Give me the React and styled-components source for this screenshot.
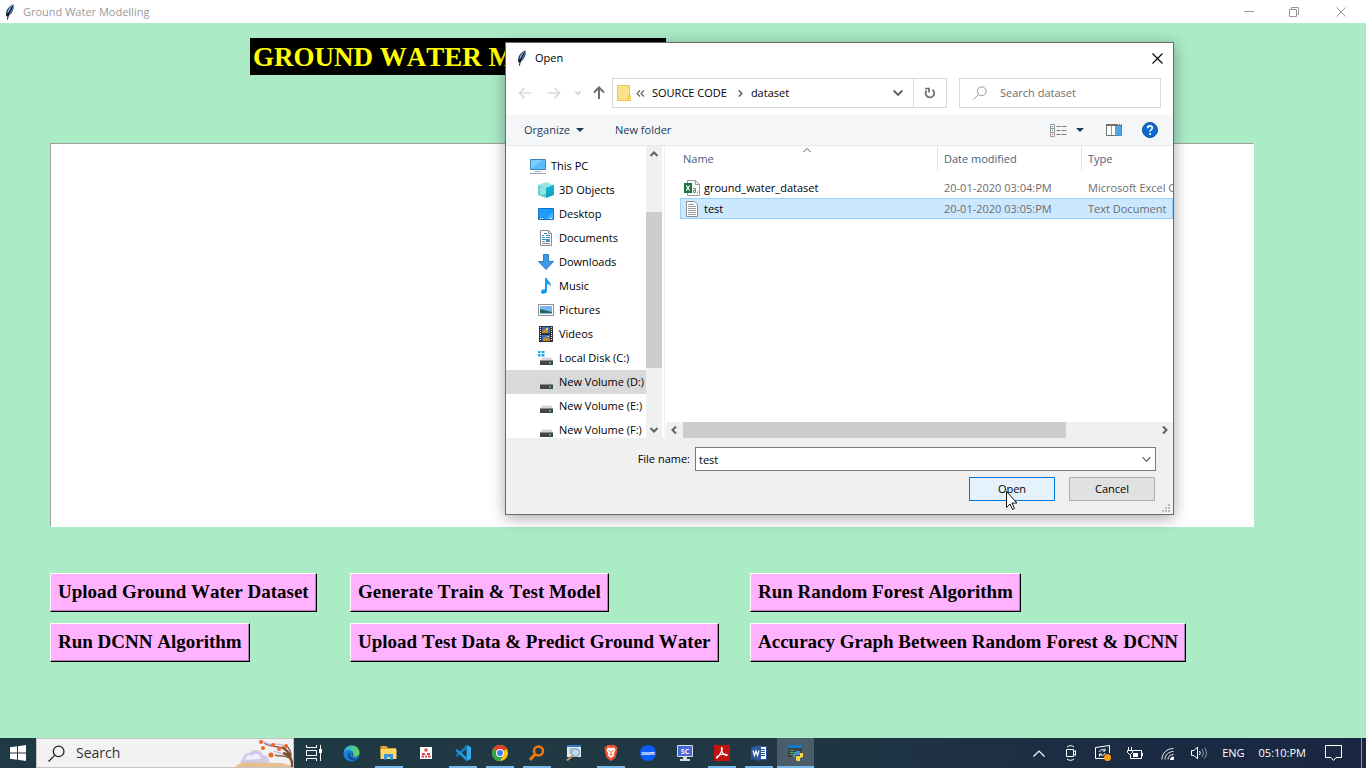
import React, { useState } from "react";
import styled, { createGlobalStyle } from "styled-components";

const GlobalStyle = createGlobalStyle`
  * {
    box-sizing: border-box;
  }
  body {
    margin: 0;
    font-family: "Open Sans", "Noto Sans", sans-serif;
    font-size: 11px;
    line-height: 16px;
    color: #000;
  }
  button, input, textarea {
    font: inherit;
    color: inherit;
    border-radius: 0;
    outline: none;
  }
  svg {
    display: block;
    flex: none;
  }
`;

const Screen = styled.div`
  position: relative;
  display: flex;
  flex-direction: column;
  min-height: 100vh;
  overflow: hidden;
  background: #abebc6;
`;

const IconButton = styled.button`
  display: flex;
  align-items: center;
  justify-content: center;
  flex: none;
  width: ${(props) => props.$width || 24}px;
  height: 100%;
  padding: 0;
  border: 0;
  background: transparent;
`;

/* ---------- main window ---------- */

const TitleBar = styled.header`
  display: flex;
  align-items: center;
  height: 23px;
  padding-left: 4px;
  background: #fff;
  color: #999;
`;

const TitleText = styled.span`
  flex: 1;
  padding-left: 7px;
`;

const Main = styled.main`
  flex: 1;
  padding: 15px 112px 0 50px;
`;

const Heading = styled.h1`
  width: 416px;
  height: 37px;
  margin: 0 0 68px 200px;
  padding-left: 3px;
  background: #000;
  color: #ff0;
  font: bold 27px/39px "Liberation Serif", serif;
  font-kerning: none;
  white-space: nowrap;
  overflow: hidden;
`;

const Output = styled.textarea`
  display: block;
  width: 100%;
  height: 384px;
  padding: 2px;
  border: 1px solid #fff;
  border-top-color: #a0a0a0;
  border-left-color: #a0a0a0;
  background: #fff;
  resize: none;
`;

const Actions = styled.div`
  display: grid;
  grid-template-columns: 300px 400px auto;
  justify-content: start;
  justify-items: start;
  gap: 11px 0;
  margin-top: 46px;
`;

const ActionButton = styled.button`
  height: 39px;
  padding: 0 7px 2px;
  border: 1px solid;
  border-color: #fff #000 #000 #fff;
  background: #ffb3fe;
  box-shadow: inset -1px -1px 0 #b27db2;
  font: bold 19px/35px "Liberation Serif", serif;
  font-kerning: none;
  white-space: nowrap;
`;

/* ---------- open dialog ---------- */

const Dialog = styled.section`
  position: absolute;
  top: 42px;
  left: 505px;
  display: flex;
  flex-direction: column;
  width: 669px;
  border: 1px solid #6b6b6b;
  background: #fff;
  box-shadow: 0 3px 14px rgba(0, 0, 0, 0.35);
`;

const DialogTitle = styled.div`
  display: flex;
  align-items: center;
  height: 30px;
  padding-left: 10px;
`;

const NavBar = styled.div`
  display: flex;
  align-items: center;
  height: 42px;
  padding: 0 12px 2px 5px;
`;

const NavButton = styled(IconButton)`
  height: 30px;
`;

const Address = styled.div`
  display: flex;
  align-items: center;
  flex: 1;
  height: 30px;
  padding-left: 4px;
  border: 1px solid #d9d9d9;
`;

const CrumbMark = styled.span`
  padding-left: 5px;
`;

const Crumb = styled.a`
  flex: ${(props) => (props.$last ? 1 : "none")};
  padding: 0 10px 0 7px;
  color: #000;
  text-decoration: none;
`;

const RefreshButton = styled(IconButton)`
  height: 30px;
  border: 1px solid #d9d9d9;
  border-left: 0;
`;

const SearchField = styled.label`
  display: flex;
  align-items: center;
  gap: 13px;
  width: 202px;
  height: 30px;
  margin-left: 12px;
  padding-left: 13px;
  border: 1px solid #d9d9d9;
`;

const SearchInput = styled.input`
  flex: 1;
  min-width: 0;
  padding: 0;
  border: 0;
  background: transparent;
  &::placeholder {
    color: #6d6d6d;
    opacity: 1;
  }
`;

const ToolBar = styled.div`
  display: flex;
  align-items: center;
  height: 31px;
  padding: 0 10px 0 18px;
  border-bottom: 1px solid #e5e9ee;
  background: #f5f6f8;
`;

const ToolButton = styled.button`
  display: flex;
  align-items: center;
  gap: 6px;
  margin-right: 31px;
  padding: 0;
  border: 0;
  background: transparent;
  color: #1e395b;
`;

const Spacer = styled.div`
  flex: 1;
`;

const Browser = styled.div`
  display: flex;
  height: 292px;
`;

const Tree = styled.ul`
  width: 140px;
  margin: 0;
  padding: 8px 0 0;
  list-style: none;
  overflow: hidden;
`;

const TreeItem = styled.li`
  display: flex;
  align-items: center;
  gap: 5px;
  height: 24px;
  padding-left: ${(props) => (props.$root ? 24 : 32)}px;
  background: ${(props) => (props.$selected ? "#d9d9d9" : "transparent")};
  white-space: nowrap;
`;

const TreeScroll = styled.div`
  display: flex;
  flex-direction: column;
  width: 16px;
  background: #f0f0f0;
`;

const ScrollButton = styled(IconButton)`
  width: 16px;
  height: 16px;
`;

const TreeThumb = styled.div`
  height: 156px;
  margin: 50px 0 auto;
  background: #cdcdcd;
`;

const Files = styled.div`
  display: flex;
  flex-direction: column;
  flex: 1;
  min-width: 0;
  margin-left: 2px;
  border-left: 1px solid #f0f0f0;
`;

const FileTable = styled.table`
  table-layout: fixed;
  width: calc(100% - 15px);
  margin-left: 15px;
  border-collapse: collapse;
`;

const HeadCell = styled.th`
  position: relative;
  width: ${(props) => props.$width};
  height: 31px;
  padding: 0 0 6px;
  color: #4c607a;
  font-weight: normal;
  text-align: left;
`;

const HeadLabel = styled.div`
  height: 25px;
  padding-left: ${(props) => props.$pad}px;
  border-right: 1px solid ${(props) => (props.$last ? "transparent" : "#e5e5e5")};
  line-height: 26px;
`;

const SortMark = styled.span`
  position: absolute;
  top: 0;
  left: 0;
  right: 4px;
  display: flex;
  justify-content: center;
`;

const FileRow = styled.tr`
  height: 21px;
  background: ${(props) => (props.$selected ? "#cce8ff" : "transparent")};
  outline: ${(props) => (props.$selected ? "1px solid #99d1ff" : "none")};
  outline-offset: -1px;
`;

const FileCell = styled.td`
  padding: 0 0 0 ${(props) => (props.$name ? 4 : 6)}px;
  color: ${(props) => (props.$name ? "#000" : "#6d6d6d")};
  white-space: nowrap;
  overflow: hidden;
`;

const FileName = styled.span`
  display: flex;
  align-items: center;
  gap: 4px;
`;

const FileScroll = styled.div`
  display: flex;
  align-items: center;
  height: 16px;
  margin-top: auto;
  margin-left: 1px;
  background: #f0f0f0;
`;

const FileThumb = styled.div`
  width: 383px;
  height: 16px;
  margin: 0 auto 0 1px;
  background: #cdcdcd;
`;

const DialogFooter = styled.form`
  display: flex;
  flex-direction: column;
  gap: 6px;
  position: relative;
  height: 76px;
  padding: 9px 17px 0 0;
  background: #f0f0f0;
`;

const FooterRow = styled.div`
  display: flex;
  align-items: center;
  justify-content: flex-end;
  gap: ${(props) => props.$gap}px;
  height: 24px;
  padding-right: ${(props) => props.$inset || 0}px;
`;

const FileNameBox = styled.div`
  display: flex;
  width: 461px;
  height: 24px;
  border: 1px solid #7a7a7a;
  background: #fff;
`;

const FileNameInput = styled.input`
  flex: 1;
  min-width: 0;
  padding: 2px 3px 0;
  border: 0;
  background: transparent;
`;

const DialogButton = styled.button`
  width: 86px;
  height: 24px;
  padding: 0;
  border: 1px solid ${(props) => (props.$primary ? "#0078d7" : "#adadad")};
  background: ${(props) => (props.$primary ? "#e5f1fb" : "#e1e1e1")};
`;

const Grip = styled.svg`
  position: absolute;
  right: 3px;
  bottom: 2px;
`;

const Cursor = styled.svg`
  position: absolute;
  top: 448px;
  left: 500px;
`;

/* ---------- task bar ---------- */

const TaskBar = styled.footer`
  display: flex;
  height: 30px;
  background: linear-gradient(90deg, #1f3a44 0%, #203843 55%, #1b2c43 80%, #1a2742 100%);
  color: #fff;
`;

const TaskSearch = styled.label`
  display: flex;
  align-items: center;
  width: 258px;
  padding-left: 11px;
  border: 1px solid #c4c4c4;
  background: #f2f2f2;
`;

const TaskSearchInput = styled.input`
  flex: 1;
  min-width: 0;
  padding: 0 0 0 11px;
  border: 0;
  background: transparent;
  font-size: 14px;
  &::placeholder {
    color: #333;
    opacity: 1;
  }
`;

const TaskButton = styled(IconButton)`
  width: ${(props) => props.$width || 37}px;
  background: ${(props) => (props.$active ? "#4b5d68" : "transparent")};
  box-shadow: ${(props) => (props.$active ? "inset 0 -2px 0 #76b9ed" : "none")};
  ${(props) =>
    props.$open &&
    `background: linear-gradient(#76b9ed, #76b9ed) no-repeat center bottom / 28px 2px;`}
`;

const Tray = styled.div`
  display: flex;
  align-items: center;
  margin-left: auto;
`;

const TrayText = styled.span`
  padding: 0 7px;
  white-space: nowrap;
`;

const ShowDesktop = styled.button`
  width: 5px;
  height: 30px;
  margin-left: 8px;
  padding: 0;
  border: 0;
  border-left: 1px solid #8a929f;
  background: transparent;
`;

/* ---------- icons ---------- */

const Feather = () => (
  <svg width="12" height="16" viewBox="0 0 12 16">
    <path d="M9.500 0.500C6 1.500 3 4.500 2.200 8.500L2 12l1.800.5C6.500 11 8.700 8 9.500 4.500z" fill="#1b2838" />
    <path d="M9 1C6.500 2.500 4 5 3.200 9L5 8l1.500-3z" fill="#8db8ef" />
    <path d="M9 1.500L6.500 6 4.500 11C7 9.500 8.500 6.500 9 4z" fill="#4a80cc" />
    <path d="M8.500 2.500L4.500 9.500 3.500 15.500" fill="none" stroke="#05070a" />
  </svg>
);

const Chevron = ({ dir = "down", size = 8, color = "#606060", weight = 2 }) => {
  const turn = { down: 0, left: 90, up: 180, right: 270 }[dir];
  return (
    <svg width={size} height={size} viewBox="0 0 8 8">
      <path d="M0.500 2L4 5.500 7.500 2" fill="none" stroke={color} strokeWidth={weight} transform={`rotate(${turn} 4 4)`} />
    </svg>
  );
};

const Arrow = ({ dir, color }) => (
  <svg width="14" height="14" viewBox="0 0 14 14">
    <path
      d="M13 7H2M6.500 2L1.500 7l5 5"
      fill="none"
      stroke={color}
      strokeWidth={dir === "up" ? 2 : 1.7}
      transform={`rotate(${{ left: 0, up: 90, right: 180 }[dir]} 7 7)`}
    />
  </svg>
);

const Caret = () => (
  <svg width="8" height="4" viewBox="0 0 8 4">
    <path d="M0 0h8L4 4z" fill="#1e395b" />
  </svg>
);

const Cross = ({ size = 11, color = "#000" }) => (
  <svg width={size} height={size} viewBox="0 0 11 11">
    <path d="M0.500 0.500l10 10M10.500 0.500l-10 10" stroke={color} strokeWidth="1.100" />
  </svg>
);

const Magnifier = ({ size, color, weight = 1 }) => (
  <svg width={size} height={size} viewBox="0 0 16 16" fill="none" stroke={color} strokeWidth={weight}>
    <circle cx="10" cy="6" r="5" />
    <path d="M6.500 9.500L0.500 15.500" />
  </svg>
);

const Folder = () => (
  <svg width="14" height="16" viewBox="0 0 14 16">
    <path d="M0.500 0.500h12v10h1v5h-13z" fill="#ffe08a" stroke="#ecc44e" />
    <path d="M11.500 10.500v5" stroke="#ecc44e" />
  </svg>
);

const ViewIcon = () => (
  <svg width="17" height="13" viewBox="0 0 17 13">
    <path d="M0.500 0.500h4v12h-4zM0.500 4.500h4M0.500 8.500h4" fill="#fff" stroke="#9a9a9a" />
    <path d="M2 2h1v1H2zM2 6h1v1H2z" fill="#3a78b5" />
    <path d="M2 10h1v1H2z" fill="#c22" />
    <path d="M6.500 2.500h4m1 0h5M6.500 6.500h4m1 0h5M6.500 10.500h4m1 0h5" stroke="#7d7d7d" />
  </svg>
);

const PreviewIcon = () => (
  <svg width="16" height="12" viewBox="0 0 16 12">
    <path d="M0.500 0.500h15v11h-15z" fill="#fff" stroke="#707070" />
    <path d="M0 0h16v2H0z" fill="#707070" />
    <path d="M5.500 2v9" stroke="#999" />
    <path d="M9 2h6.500v9.500H9z" fill="#4ba3e8" />
    <path d="M12 0.500h1M14 0.500h1" stroke="#fff" />
  </svg>
);

const HelpIcon = () => (
  <svg width="16" height="16" viewBox="0 0 16 16">
    <circle cx="8" cy="8" r="7.500" fill="#0a6cd0" stroke="#0b4f99" />
    <path d="M5.600 6.200C5.700 3 10.500 3.200 10.300 6c-.1 1.600-2.200 1.700-2.200 3.600" fill="none" stroke="#fff" strokeWidth="1.700" />
    <circle cx="8.100" cy="12" r="1.100" fill="#fff" />
  </svg>
);

const PcIcon = () => (
  <svg width="16" height="16" viewBox="0 0 16 16">
    <path d="M0.500 1.500h15v10h-15z" fill="#58bdfb" stroke="#3b87bb" />
    <path d="M1 11V2h11z" fill="#8dd5ff" opacity=".7" />
    <path d="M5 13.500h6M0 15.500h16" stroke="#93a3b0" />
  </svg>
);

const CubeIcon = () => (
  <svg width="16" height="16" viewBox="0 0 16 16">
    <path d="M8 0l8 3-8 3-8-3z" fill="#9be4e6" />
    <path d="M0 3l8 3v10l-8-3z" fill="#5fcfd6" />
    <path d="M16 3L8 6v10l8-3z" fill="#12a5bf" />
    <path d="M2 5l6 1v6l-6 1z" fill="#c5f0f0" opacity=".55" />
    <path d="M8 6l8-3v7l-8 1z" fill="#0fb2cd" />
  </svg>
);

const DesktopIcon = () => (
  <svg width="16" height="16" viewBox="0 0 16 16">
    <path d="M0.500 2.500h15v11h-15z" fill="#1c9dfb" stroke="#1271b8" />
    <path d="M8 13l7-7v7z" fill="#48b3ff" />
    <path d="M2 12.500h1m1 0h1m7 0h2" stroke="#fff" />
  </svg>
);

const DocumentIcon = () => (
  <svg width="16" height="16" viewBox="0 0 16 16">
    <path d="M2.500 0.500h8l3 3v12h-11z" fill="#fff" stroke="#8c8c8c" />
    <path d="M10.500 0.500v3h3" fill="none" stroke="#8c8c8c" />
    <path d="M6 3.500h3M4 5.500h2m2 0h4M4 7.500h3m1 0h4M4 9.500h4" stroke="#2d8bc7" />
    <path d="M8 9h4v3H8z" fill="#4b90b8" />
    <path d="M4 11.500h3M4 13.500h8" stroke="#888" />
  </svg>
);

const DownloadIcon = () => (
  <svg width="16" height="16" viewBox="0 0 16 16">
    <path d="M5.500 0.500h5v7h5L8 15.500 0.500 7.500h5z" fill="#3f97e8" stroke="#2f7dc6" />
  </svg>
);

const MusicIcon = () => (
  <svg width="16" height="16" viewBox="0 0 16 16">
    <path d="M7 0h2c0 3 4.500 4 4 9-.5-2-2-3-4-3v7c0 3-6 4-6 1 0-2 2-3 4-2.500z" fill="#149bf0" />
  </svg>
);

const PictureIcon = () => (
  <svg width="16" height="16" viewBox="0 0 16 16">
    <path d="M0.500 2.500h15v11h-15z" fill="#fff" stroke="#8f8f8f" />
    <path d="M2 4h12v8H2z" fill="#76b9ee" />
    <path d="M2 7l4 1 8 2v1H2z" fill="#28665f" />
    <path d="M2 11h12v1H2z" fill="#8bbbe0" />
  </svg>
);

const VideoIcon = () => (
  <svg width="16" height="16" viewBox="0 0 16 16">
    <path d="M1 0h14v16H1z" fill="#333" />
    <path d="M4 1h8v6H4zM4 9h8v6H4z" fill="#3c6bd0" />
    <path d="M4 5l3-2 3 2v2H4zM5 13l2-2 5 2v2H5z" fill="#c28c28" />
    <path d="M8 2h2v2H8zM9 10h2v1H9z" fill="#f3d24a" />
    <path d="M2.500 1v14M13.500 1v14" stroke="#eee" strokeDasharray="1 1" />
  </svg>
);

const DriveIcon = ({ windows }) => (
  <svg width="16" height="16" viewBox="0 0 16 16">
    <path d="M4 7.500h9l2 3.500H2z" fill="#d5d5d5" />
    <path d="M2 10.500h13V15H2z" fill="#454545" />
    <path d="M11 12h2v1.500h-2z" fill="#35e04d" />
    {windows && <path d="M0 1h2.500v2H0zM3.500 1h3v2h-3zM0 4h2.500v2.500H0zM3.500 4h3v2.500h-3z" fill="#14a9ef" />}
  </svg>
);

const ExcelFile = () => (
  <svg width="16" height="16" viewBox="0 0 16 16">
    <path d="M3.500 0.500h8l4 4v11h-12z" fill="#fff" stroke="#9a9a9a" />
    <path d="M11.500 0.500v4h4" fill="none" stroke="#9a9a9a" />
    <path d="M0 3h8v10H0z" fill="#1e7145" />
    <path d="M2.300 5.500l3.400 5M5.700 5.500l-3.400 5" stroke="#fff" strokeWidth="1.300" />
    <path d="M9 8.500h2.500v4H9.500v-2h2M14 11.500l-1 2" fill="none" stroke="#4f9b73" />
  </svg>
);

const TextFile = () => (
  <svg width="16" height="16" viewBox="0 0 16 16">
    <path d="M2.500 0.500h8l3 3v12h-11z" fill="#fff" stroke="#8c8c8c" />
    <path d="M4 3.500h6M4 5.500h8M4 7.500h8M4 9.500h8M4 11.500h8M4 13.500h8" stroke="#9a9a9a" />
  </svg>
);

const StartIcon = () => (
  <svg width="16" height="16" viewBox="0 0 16 16">
    <path d="M0 2.300l7-1v6.200H0zM8 1.200L16 0v7.500H8zM0 8.500h7v6.200l-7-1zM8 8.500h8V16l-8-1.200z" fill="#fff" />
  </svg>
);

const SearchArt = () => (
  <svg width="58" height="28" viewBox="0 0 58 28">
    <path d="M5 23C8 21 8 14 14 14c5-5 12-3 14 2 6 0 5 5 7 7l-7 3H8z" fill="#cfcbe6" />
    <path d="M10 21c2-6 5-5 7-4 3-4 9-2 9 3z" fill="#efeefa" />
    <path d="M0 28c4-6 18-5 27-4 14-1 27 0 31 4z" fill="#e8bf91" />
    <path d="M57 28c1-8-3-12-9-14M56 21c-1-6-3-9-9-13" fill="none" stroke="#7d4a2c" strokeWidth="2.500" />
    <path d="M54 19c-4-3-9-1-14-3M49 10C43 6 36 9 29 4M56 17c0-5-2-8-5-11" fill="none" stroke="#8a5f52" strokeWidth="1.500" />
    <path d="M38 7c-4-3-8-2-12-6M50 8c-4-4-8-2-12-3M47 15c-3-2-5-1-8-3" fill="none" stroke="#c8b9df" strokeWidth="1.500" />
    <g fill="#f26522">
      <circle cx="26" cy="3" r="2" />
      <circle cx="28" cy="9" r="2" />
      <circle cx="38" cy="6" r="2" />
      <circle cx="36" cy="16" r="2.500" />
      <circle cx="44" cy="10" r="2" />
      <circle cx="51" cy="7" r="2" />
    </g>
  </svg>
);

const TaskViewIcon = () => (
  <svg width="18" height="16" viewBox="0 0 18 16" fill="none" stroke="#fff">
    <path d="M1.500 0v2.500h10V0M1.500 5.500h10v5h-10zM1.500 16v-2.500h10V16M15.500 0v16" />
    <path d="M14 4h3v4h-3z" fill="#fff" stroke="none" />
  </svg>
);

const EdgeIcon = () => (
  <svg width="17" height="17" viewBox="0 0 17 17">
    <defs>
      <linearGradient id="edgeTop" x1="0" x2="1">
        <stop offset="0" stopColor="#28a9e8" />
        <stop offset="1" stopColor="#67db55" />
      </linearGradient>
    </defs>
    <circle cx="8.500" cy="8.500" r="8" fill="#1583d8" />
    <path d="M9 8c.8 2 3 3.500 7.300 2.500-1 1.500-4 1.500-5.800.8C9 10.700 8.500 9 9 8z" fill="#203843" />
    <path d="M0.600 8C1 3.500 4.500 0.500 8.500 0.500c5 0 8 3.500 8 7 0 3-2.500 4.200-4.500 4.200-1.500 0-2.500-.7-2-1.700C11.500 7 8 4.500 5 5 3 5.300 1.200 6.500 0.600 8z" fill="url(#edgeTop)" />
    <path d="M6 7c-3 4 0 9 5 8.500 2-.2 3.500-1.300 4.500-2.500-5 1.500-9-1-8.500-4.500z" fill="#14509e" />
  </svg>
);

const ExplorerIcon = () => (
  <svg width="17" height="16" viewBox="0 0 17 16">
    <path d="M0.500 1h6l1.500 2h8v4H0.500z" fill="#e4a32c" />
    <path d="M0.500 4h16v10h-16z" fill="#ffd767" />
    <path d="M4 14.500V9h9v5.500h-3V12H7v2.500z" fill="#3d96dd" />
  </svg>
);

const DotsIcon = () => (
  <svg width="12" height="14" viewBox="0 0 12 14">
    <path d="M0 1h12v12H0z" fill="#fff" />
    <path d="M4.500 2.500h3v3h-3zM2 7h3v2H2zM7 7h3v2H7zM1.500 9.500H4v2H1.500zM5 9.500h2v2H5zM8 9.500h2.500v2H8z" fill="#e0474c" />
  </svg>
);

const CodeIcon = () => (
  <svg width="16" height="16" viewBox="0 0 16 16">
    <path d="M11.500 0L16 2v12l-4.500 2z" fill="#35a9f2" />
    <path d="M11.500 0v4L2 12 0.300 10.500z" fill="#1279c4" />
    <path d="M11.500 16v-4L2 4 0.300 5.500z" fill="#2595e0" />
  </svg>
);

const ChromeIcon = () => (
  <svg width="16" height="16" viewBox="0 0 16 16">
    <circle cx="8" cy="8" r="8" fill="#fbc116" />
    <path d="M8 8L1.100 4a8 8 0 0 1 13.800 0z" fill="#e33b2e" />
    <path d="M8 8L1.100 4A8 8 0 0 0 8 16l3.500-6z" fill="#2fa44f" />
    <circle cx="8" cy="8" r="4" fill="#fff" />
    <circle cx="8" cy="8" r="3" fill="#3c7ee8" />
  </svg>
);

const OrangeSearch = () => (
  <svg width="16" height="16" viewBox="0 0 16 16" fill="none" stroke="#f27a0c">
    <circle cx="9.500" cy="6" r="4.500" strokeWidth="2.500" />
    <path d="M6 9.500L1 15" strokeWidth="3" />
  </svg>
);

const LensIcon = () => (
  <svg width="16" height="16" viewBox="0 0 16 16">
    <path d="M1 0h14v12H1z" fill="#e8edf2" />
    <path d="M1 0h14v2H1z" fill="#2f75c9" />
    <path d="M3 4h5M3 6h3M3 8h3" stroke="#8ea1b8" />
    <circle cx="9.500" cy="7.500" r="4" fill="#b9ddf4" stroke="#7c8d9b" />
    <path d="M6.500 10.500L1 15.500" stroke="#c09a69" strokeWidth="2" />
  </svg>
);

const BraveIcon = () => (
  <svg width="14" height="16" viewBox="0 0 14 16">
    <path d="M3.500 0h7L12 1.500l1.500.5-.5 3 .3 1-2 7L7 16l-4.300-3-2-7L1 5 0.500 2 2 1.500z" fill="#f1502b" />
    <path d="M7 3l3-.5L11.500 5 9.500 9l1 1.500L7 13l-3.500-2.500 1-1.500-2-4L4 2.500z" fill="#fff" />
    <path d="M4.500 5.500l2 1M9.500 5.500l-2 1M7 7v2M5.500 10L7 9.500 8.500 10" fill="none" stroke="#f1502b" />
  </svg>
);

const ZoomIcon = () => (
  <svg width="16" height="16" viewBox="0 0 16 16">
    <circle cx="8" cy="8" r="8" fill="#0b5cff" />
    <text x="8" y="10" fill="#fff" fontSize="5" fontWeight="bold" textAnchor="middle">zoom</text>
  </svg>
);

const ScIcon = () => (
  <svg width="16" height="16" viewBox="0 0 16 16">
    <path d="M0.500 0.500h15v11h-15z" fill="#4568d8" stroke="#d8dce2" />
    <text x="8" y="9" fill="#fff" fontSize="7" fontWeight="bold" textAnchor="middle">SC</text>
    <path d="M6 12h4v2h3v2H3v-2h3z" fill="#d5d9df" />
  </svg>
);

const AcrobatIcon = () => (
  <svg width="16" height="16" viewBox="0 0 16 16">
    <path d="M0 0h16v16H0z" fill="#c3130f" />
    <path d="M7.500 2.500c2 0 0 6-4.500 10.500-2 0 2-3.500 6-3.800 4-.3 5 1 3.500 1.500C10 11 6.500 6 7.500 2.500z" fill="none" stroke="#fff" strokeWidth="1.200" />
  </svg>
);

const WordIcon = () => (
  <svg width="16" height="16" viewBox="0 0 16 16">
    <path d="M8 1.500h7.500v13H8z" fill="#fff" stroke="#2b579a" />
    <path d="M9.500 4.500h4.500M9.500 6.500h4.500M9.500 8.500h4.500M9.500 10.500h4.500" stroke="#2b579a" />
    <path d="M0 2l10-2v16L0 14z" fill="#2b579a" />
    <path d="M2 5.500L3.500 10.500 5 6l1.500 4.500L8 5.500" fill="none" stroke="#fff" strokeWidth="1.200" />
  </svg>
);

const PythonIcon = () => (
  <svg width="16" height="16" viewBox="0 0 16 16">
    <path d="M0 0h14v12H0z" fill="#3b4247" />
    <path d="M0 0h14v3H0z" fill="#1877c9" />
    <path d="M2 5.500h4M2 7.500h6M2 9.500h3" stroke="#4fa862" />
    <path d="M8 6h4v4H8l-1 2H5V9l3-1z" fill="#4c8fd0" />
    <path d="M8 15v-4h4V8h3v4l-3 1v3H9z" fill="#f8d548" />
  </svg>
);

const TrayChevron = () => (
  <svg width="12" height="7" viewBox="0 0 12 7">
    <path d="M0.500 6.500L6 1l5.500 5.500" fill="none" stroke="#fff" strokeWidth="1.200" />
  </svg>
);

const MeetIcon = () => (
  <svg width="12" height="16" viewBox="0 0 12 16" fill="none" stroke="#fff">
    <path d="M1.500 4.500h7v7h-7zM8.500 7l2-1.500v5l-2-1.500M2 2C4 .2 7 .2 9 2M2 14c2 1.800 5 1.800 7 0" />
  </svg>
);

const UpdateIcon = () => (
  <svg width="16" height="16" viewBox="0 0 16 16">
    <path d="M10 13.500H0.500V2.500L14.500 0.500V8" fill="none" stroke="#fff" />
    <path d="M4.500 7C5 4 9 4 10 6V3.500M10 6H7.500M10 8c-1 3-4 3-5.500 1v2.500M4.500 9H7" fill="none" stroke="#fff" />
    <circle cx="12.500" cy="12.500" r="3.500" fill="#ff9a16" />
  </svg>
);

const BatteryIcon = () => (
  <svg width="17" height="13" viewBox="0 0 17 13" fill="none" stroke="#fff">
    <path d="M6 3.500h8.500v8H3.500V8M15.500 6v3M1.500 0v3M4.500 0v3M0.500 3.500h5v2l-2 2h-1l-2-2z" />
    <path d="M6 6h5v4H6z" fill="#fff" stroke="none" />
  </svg>
);

const WifiIcon = () => (
  <svg width="13" height="13" viewBox="0 0 13 13" fill="none" stroke="#fff">
    <path d="M1 12.500C1 6 6 1.500 12.500 1.500M4 12.500C4 8 7.500 4.500 12.500 4.500M7 12.500c0-3 2-5 5.500-5" opacity=".9" />
    <path d="M9.500 12.500c0-1.500 1-2.500 3-2.500v2.500z" fill="#fff" />
  </svg>
);

const SoundIcon = () => (
  <svg width="17" height="14" viewBox="0 0 17 14" fill="none" stroke="#fff">
    <path d="M0.500 4.500H3l3.500-3.500v12L3 9.500H0.500zM8.500 5q1.500 2 0 4" />
    <path d="M11 3q3 4 0 8M13.500 1.500q4 5.500 0 11" opacity=".5" />
  </svg>
);

const NoticeIcon = () => (
  <svg width="17" height="16" viewBox="0 0 17 16">
    <path d="M0.500 0.500h16v12h-5.500l-2.500 3-2.500-3h-5.500z" fill="none" stroke="#fff" />
  </svg>
);

/* ---------- data ---------- */

const actions = [
  "Upload Ground Water Dataset",
  "Generate Train & Test Model",
  "Run Random Forest Algorithm",
  "Run DCNN Algorithm",
  "Upload Test Data & Predict Ground Water",
  "Accuracy Graph Between Random Forest & DCNN",
];

const places = [
  { name: "This PC", icon: <PcIcon />, root: true },
  { name: "3D Objects", icon: <CubeIcon /> },
  { name: "Desktop", icon: <DesktopIcon /> },
  { name: "Documents", icon: <DocumentIcon /> },
  { name: "Downloads", icon: <DownloadIcon /> },
  { name: "Music", icon: <MusicIcon /> },
  { name: "Pictures", icon: <PictureIcon /> },
  { name: "Videos", icon: <VideoIcon /> },
  { name: "Local Disk (C:)", icon: <DriveIcon windows /> },
  { name: "New Volume (D:)", icon: <DriveIcon />, selected: true },
  { name: "New Volume (E:)", icon: <DriveIcon /> },
  { name: "New Volume (F:)", icon: <DriveIcon /> },
];

const files = [
  { name: "ground_water_dataset", date: "20-01-2020 03:04:PM", type: "Microsoft Excel Comma Separated", icon: <ExcelFile /> },
  { name: "test", date: "20-01-2020 03:05:PM", type: "Text Document", icon: <TextFile /> },
];

const tasks = [
  { name: "Edge", icon: <EdgeIcon /> },
  { name: "File Explorer", icon: <ExplorerIcon />, open: true },
  { name: "Launcher", icon: <DotsIcon /> },
  { name: "Visual Studio Code", icon: <CodeIcon />, open: true },
  { name: "Chrome", icon: <ChromeIcon />, open: true },
  { name: "Finder", icon: <OrangeSearch />, open: true },
  { name: "Magnifier", icon: <LensIcon /> },
  { name: "Brave", icon: <BraveIcon />, open: true },
  { name: "Zoom", icon: <ZoomIcon /> },
  { name: "SC", icon: <ScIcon /> },
  { name: "Acrobat", icon: <AcrobatIcon />, open: true },
  { name: "Word", icon: <WordIcon />, open: true },
  { name: "Python", icon: <PythonIcon />, active: true },
];

const tray = [
  { name: "Hidden icons", icon: <TrayChevron /> },
  { name: "Meet now", icon: <MeetIcon /> },
  { name: "Updates", icon: <UpdateIcon /> },
  { name: "Battery", icon: <BatteryIcon /> },
  { name: "Network", icon: <WifiIcon /> },
  { name: "Volume", icon: <SoundIcon /> },
];

const OpenDialog = () => {
  const [selected, setSelected] = useState("test");

  return (
    <Dialog role="dialog" aria-label="Open">
      <DialogTitle>
        <Feather />
        <TitleText>Open</TitleText>
        <IconButton $width={32} aria-label="Close">
          <Cross />
        </IconButton>
      </DialogTitle>

      <NavBar>
        <NavButton $width={27} aria-label="Back"><Arrow dir="left" color="#d9d9d9" /></NavButton>
        <NavButton $width={32} aria-label="Forward"><Arrow dir="right" color="#d9d9d9" /></NavButton>
        <NavButton $width={15} aria-label="Recent"><Chevron size={6} color="#d0d0d0" /></NavButton>
        <NavButton $width={27} aria-label="Up"><Arrow dir="up" color="#6d6d6d" /></NavButton>
        <Address>
          <Folder />
          <CrumbMark>
            <svg width="9" height="7" viewBox="0 0 9 7">
              <path d="M4 0.500L1 3.500l3 3M8 0.500L5 3.500l3 3" fill="none" stroke="#606060" strokeWidth="1.200" />
            </svg>
          </CrumbMark>
          <Crumb href="#source">SOURCE CODE</Crumb>
          <Chevron dir="right" size={7} weight={1.7} />
          <Crumb href="#dataset" $last>dataset</Crumb>
          <IconButton $width={30} aria-label="Previous locations"><Chevron size={10} weight={1.6} /></IconButton>
        </Address>
        <RefreshButton $width={33} aria-label="Refresh">
          <svg width="12" height="12" viewBox="0 0 12 12">
            <path d="M2.500 3.500A4.300 4.300 0 1 0 8.500 2.700M1 1.500h4V5.500" fill="none" stroke="#6d6d6d" strokeWidth="1.700" />
          </svg>
        </RefreshButton>
        <SearchField>
          <Magnifier size={14} color="#8a8391" />
          <SearchInput aria-label="Search dataset" placeholder="Search dataset" />
        </SearchField>
      </NavBar>

      <ToolBar>
        <ToolButton>Organize <Caret /></ToolButton>
        <ToolButton>New folder</ToolButton>
        <Spacer />
        <IconButton $width={22} aria-label="View"><ViewIcon /></IconButton>
        <IconButton $width={22} aria-label="More views"><Caret /></IconButton>
        <IconButton $width={46} aria-label="Preview pane"><PreviewIcon /></IconButton>
        <IconButton $width={26} aria-label="Help"><HelpIcon /></IconButton>
      </ToolBar>

      <Browser>
        <Tree>
          {places.map((place) => (
            <TreeItem key={place.name} $root={place.root} $selected={place.selected}>
              {place.icon}
              {place.name}
            </TreeItem>
          ))}
        </Tree>
        <TreeScroll>
          <ScrollButton aria-label="Scroll up"><Chevron dir="up" /></ScrollButton>
          <TreeThumb />
          <ScrollButton aria-label="Scroll down"><Chevron /></ScrollButton>
        </TreeScroll>
        <Files>
          <FileTable>
            <thead>
              <tr>
                <HeadCell $width="258px">
                  <HeadLabel $pad={3}>Name</HeadLabel>
                  <SortMark><Chevron dir="up" size={8} weight={1} /></SortMark>
                </HeadCell>
                <HeadCell $width="144px"><HeadLabel $pad={6}>Date modified</HeadLabel></HeadCell>
                <HeadCell><HeadLabel $pad={6} $last>Type</HeadLabel></HeadCell>
              </tr>
            </thead>
            <tbody>
              {files.map((file) => (
                <FileRow key={file.name} $selected={file.name === selected} onClick={() => setSelected(file.name)}>
                  <FileCell $name><FileName>{file.icon}{file.name}</FileName></FileCell>
                  <FileCell>{file.date}</FileCell>
                  <FileCell>{file.type}</FileCell>
                </FileRow>
              ))}
            </tbody>
          </FileTable>
          <FileScroll>
            <ScrollButton aria-label="Scroll left"><Chevron dir="left" /></ScrollButton>
            <FileThumb />
            <ScrollButton aria-label="Scroll right"><Chevron dir="right" /></ScrollButton>
          </FileScroll>
        </Files>
      </Browser>

      <DialogFooter onSubmit={(e) => e.preventDefault()}>
        <FooterRow $gap={5}>
          <label htmlFor="file-name">File name:</label>
          <FileNameBox>
            <FileNameInput id="file-name" value={selected} onChange={(e) => setSelected(e.target.value)} />
            <IconButton $width={18} type="button" aria-label="Show names"><Chevron size={9} weight={1} /></IconButton>
          </FileNameBox>
        </FooterRow>
        <FooterRow $gap={14} $inset={1}>
          <DialogButton $primary>Open</DialogButton>
          <DialogButton type="button">Cancel</DialogButton>
        </FooterRow>
        <Grip width="8" height="8" viewBox="0 0 8 8">
          <path d="M6 0h2v2H6zM3 3h2v2H3zM6 3h2v2H6zM0 6h2v2H0zM3 6h2v2H3zM6 6h2v2H6z" fill="#bcbcbc" />
        </Grip>
      </DialogFooter>

      <Cursor width="12" height="19" viewBox="0 0 12 19">
        <path d="M0.500 0.500v16L4 13l2.500 5.500 2-1L6 12h5z" fill="#fff" stroke="#111" />
      </Cursor>
    </Dialog>
  );
};

const App = () => {
  return (
    <>
      <GlobalStyle />
      <Screen>
        <TitleBar>
          <Feather />
          <TitleText>Ground Water Modelling</TitleText>
          <IconButton $width={46} aria-label="Minimize">
            <svg width="10" height="1"><path d="M0 0h10v1H0z" fill="#999" /></svg>
          </IconButton>
          <IconButton $width={44} aria-label="Restore">
            <svg width="10" height="10" viewBox="0 0 10 10" fill="none" stroke="#999">
              <path d="M0.500 2.500h7v7h-7zM2.500 2V0.500h7v7H8" />
            </svg>
          </IconButton>
          <IconButton $width={50} aria-label="Close"><Cross size={10} color="#999" /></IconButton>
        </TitleBar>

        <Main>
          <Heading>GROUND WATER MODELLING</Heading>
          <Output aria-label="Output" />
          <Actions>
            {actions.map((label) => (
              <ActionButton key={label}>{label}</ActionButton>
            ))}
          </Actions>
        </Main>

        <TaskBar>
          <IconButton $width={36} aria-label="Start"><StartIcon /></IconButton>
          <TaskSearch>
            <Magnifier size={17} color="#222" weight={1.2} />
            <TaskSearchInput aria-label="Search" placeholder="Search" />
            <SearchArt />
          </TaskSearch>
          <TaskButton $width={39} aria-label="Task view"><TaskViewIcon /></TaskButton>
          {tasks.map((task) => (
            <TaskButton key={task.name} aria-label={task.name} $open={task.open} $active={task.active}>
              {task.icon}
            </TaskButton>
          ))}
          <Tray>
            {tray.map((item) => (
              <IconButton key={item.name} $width={32} aria-label={item.name}>{item.icon}</IconButton>
            ))}
            <TrayText>ENG</TrayText>
            <TrayText>05:10:PM</TrayText>
            <IconButton $width={40} aria-label="Notifications"><NoticeIcon /></IconButton>
            <ShowDesktop aria-label="Show desktop" />
          </Tray>
        </TaskBar>

        <OpenDialog />
      </Screen>
    </>
  );
};

export default App;
